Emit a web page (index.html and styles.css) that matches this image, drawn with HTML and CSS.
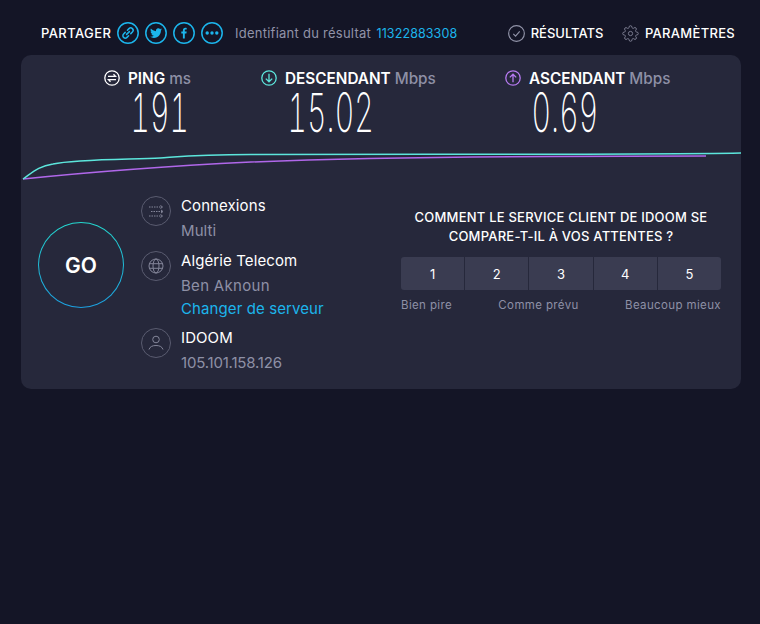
FILE: index.html
```html
<!DOCTYPE html>
<html lang="fr">
<head>
<meta charset="utf-8">
<title>Speedtest</title>
<link rel="stylesheet" href="styles.css">
</head>
<body>
<header class="topbar">
  <div class="share">
    <span class="share-label">PARTAGER</span>
    <span class="share-icon"><svg viewBox="0 0 22 22" width="22" height="22"><circle cx="11" cy="11" r="10.2" class="ic-blue"/><g class="ic-blue" stroke-width="1.5" stroke-linecap="round"><path d="M9.6 12.4l2.8-2.8"/><path d="M10.4 8.2l1.6-1.6a2.4 2.4 0 0 1 3.4 3.4l-1.6 1.6"/><path d="M11.6 13.8l-1.6 1.6a2.4 2.4 0 0 1-3.4-3.4l1.6-1.6"/></g></svg></span>
    <span class="share-icon"><svg viewBox="0 0 22 22" width="22" height="22"><circle cx="11" cy="11" r="10.2" class="ic-blue"/><path class="ic-fill" d="M17 7.3c-.4.2-.9.3-1.4.4.5-.3.9-.8 1.1-1.4-.5.3-1 .5-1.6.6a2.5 2.5 0 0 0-4.2 2.3c-2-.1-3.800-1.100-5-2.600-.7 1.100-.4 2.600.8 3.300-.4 0-.8-.1-1.100-.3 0 1.200.8 2.200 2 2.500-.4.1-.8.100-1.100 0 .3 1 1.200 1.700 2.300 1.700-1 .8-2.300 1.200-3.700 1 1.100.7 2.400 1.100 3.800 1.100 4.600 0 7.200-3.900 7-7.300.5-.4 1-.9 1.300-1.500z"/></svg></span>
    <span class="share-icon"><svg viewBox="0 0 22 22" width="22" height="22"><circle cx="11" cy="11" r="10.2" class="ic-blue"/><path class="ic-fill" d="M11.800 16.500v-5h1.600l.3-1.900h-1.900V8.500c0-.6.200-.9.900-.9h1V5.900c-.2 0-.8-.1-1.400-.1-1.500 0-2.400.9-2.400 2.500v1.300H8.300v1.900h1.600v5z"/></svg></span>
    <span class="share-icon"><svg viewBox="0 0 22 22" width="22" height="22"><circle cx="11" cy="11" r="10.2" class="ic-blue"/><circle cx="6.200" cy="11" r="1.700" class="ic-fill"/><circle cx="11" cy="11" r="1.700" class="ic-fill"/><circle cx="15.800" cy="11" r="1.700" class="ic-fill"/></svg></span>
    <span class="result-label">Identifiant du résultat</span>
    <a class="result-id">11322883308</a>
  </div>
  <nav class="nav">
    <span class="nav-item nav-results"><svg viewBox="0 0 16 16" width="17" height="17"><circle cx="8" cy="8" r="7.400" class="ic-grey"/><path class="ic-grey" d="M5 8.300l2.100 2.100 3.900-4.300"/></svg><span class="nav-r">RÉSULTATS</span></span>
    <span class="nav-item"><svg viewBox="0 0 24 24" width="17" height="17"><path class="ic-grey" stroke-width="1.300" d="M19.4 15a1.65 1.65 0 0 0 .33 1.820l.06.06a2 2 0 0 1 0 2.830 2 2 0 0 1-2.830 0l-.06-.06a1.65 1.65 0 0 0-1.820-.33 1.65 1.65 0 0 0-1 1.510V21a2 2 0 0 1-2 2 2 2 0 0 1-2-2v-.09A1.65 1.65 0 0 0 9 19.400a1.65 1.65 0 0 0-1.820.33l-.06.06a2 2 0 0 1-2.830 0 2 2 0 0 1 0-2.830l.06-.06a1.65 1.65 0 0 0 .33-1.820 1.65 1.65 0 0 0-1.510-1H3a2 2 0 0 1-2-2 2 2 0 0 1 2-2h.09A1.65 1.65 0 0 0 4.600 9a1.65 1.65 0 0 0-.33-1.820l-.06-.06a2 2 0 0 1 0-2.830 2 2 0 0 1 2.830 0l.06.06a1.65 1.65 0 0 0 1.820.33H9a1.65 1.65 0 0 0 1-1.510V3a2 2 0 0 1 2-2 2 2 0 0 1 2 2v.09a1.65 1.65 0 0 0 1 1.510 1.65 1.65 0 0 0 1.820-.33l.06-.06a2 2 0 0 1 2.830 0 2 2 0 0 1 0 2.830l-.06.06a1.65 1.65 0 0 0-.33 1.820V9a1.65 1.65 0 0 0 1.510 1H21a2 2 0 0 1 2 2 2 2 0 0 1-2 2h-.09a1.65 1.65 0 0 0-1.510 1z"/><circle cx="12" cy="12" r="3" class="ic-grey" stroke-width="1.300"/></svg><span class="nav-p">PARAMÈTRES</span></span>
  </nav>
</header>

<main class="panel">
  <section class="metrics">
    <div class="metric">
      <div class="metric-head"><svg viewBox="0 0 16 16" width="16" height="16"><circle cx="8" cy="8" r="7.200" class="ic-white"/><path class="ic-white" stroke-width="1.300" d="M4 6.300h7.500L9.500 4.200M12 9.700H4.500l2 2.100"/></svg><b>PING</b><span class="unit">ms</span></div>
      <div class="metric-value">191</div>
    </div>
    <div class="metric">
      <div class="metric-head"><svg viewBox="0 0 16 16" width="16" height="16"><circle cx="8" cy="8" r="7.200" class="ic-teal"/><path class="ic-teal" stroke-width="1.400" d="M8 3.800v8M4.800 8.600L8 11.800l3.200-3.200"/></svg><b>DESCENDANT</b><span class="unit">Mbps</span></div>
      <div class="metric-value">15.02</div>
    </div>
    <div class="metric">
      <div class="metric-head"><svg viewBox="0 0 16 16" width="16" height="16"><circle cx="8" cy="8" r="7.200" class="ic-purple"/><path class="ic-purple" stroke-width="1.400" d="M8 12.200v-8M4.800 7.400L8 4.200l3.200 3.200"/></svg><b>ASCENDANT</b><span class="unit">Mbps</span></div>
      <div class="metric-value">0.69</div>
    </div>
  </section>

  <svg class="graph" viewBox="0 0 720 36" width="720" height="36">
    <path class="line-purple" d="M2 30 C60 24 130 18 230 13 C330 9 420 8 530 7.500 L685 7"/>
    <path class="line-teal" d="M2 30 C12 23 18 17 32 15 C55 10 110 10.500 139 9 C155 8 175 5.500 230 5.500 C400 5 600 6 720 4"/>
  </svg>

  <section class="lower">
    <div class="go-wrap"><div class="go">GO</div></div>
    <div class="info">
      <div class="info-row row-conn">
        <span class="info-icon"><svg viewBox="0 0 30 30" width="30" height="30"><circle cx="15" cy="15" r="14.500" class="ic-dim"/><g class="ic-faint" stroke-dasharray="1.500 1"><path d="M8 11h12M10 15.500h11M8 20h12"/></g><path class="ic-faint" d="M19.500 9.500l2 1.500-2 1.500M20 14l2 1.500-2 1.500M19.500 18.500l2 1.500-2 1.500"/></svg></span>
        <div><div class="info-title">Connexions</div><div class="info-sub">Multi</div></div>
      </div>
      <div class="info-row row-server">
        <span class="info-icon"><svg viewBox="0 0 30 30" width="30" height="30"><circle cx="15" cy="15" r="14.500" class="ic-dim"/><circle cx="15" cy="15" r="7" class="ic-faint"/><ellipse cx="15" cy="15" rx="3" ry="7" class="ic-faint"/><path class="ic-faint" d="M8 12.700h14M8 17.300h14"/></svg></span>
        <div><div class="info-title">Algérie Telecom</div><div class="info-sub sub-wide">Ben Aknoun</div><a class="info-link">Changer de serveur</a></div>
      </div>
      <div class="info-row">
        <span class="info-icon"><svg viewBox="0 0 30 30" width="30" height="30"><circle cx="15" cy="15" r="14.500" class="ic-dim"/><circle cx="15" cy="11.500" r="3.300" class="ic-faint"/><path class="ic-faint" d="M8 21.500c1-3 3.500-4 7-4s6 1 7 4"/></svg></span>
        <div><div class="info-title">IDOOM</div><div class="info-sub sub-tight">105.101.158.126</div></div>
      </div>
    </div>
    <div class="survey">
      <h2 class="survey-title">COMMENT LE SERVICE CLIENT DE IDOOM SE<br>COMPARE-T-IL À VOS ATTENTES ?</h2>
      <div class="scale">
        <span class="scale-btn">1</span><span class="scale-btn">2</span><span class="scale-btn">3</span><span class="scale-btn">4</span><span class="scale-btn">5</span>
      </div>
      <div class="scale-labels"><span>Bien pire</span><span>Comme prévu</span><span>Beaucoup mieux</span></div>
    </div>
  </section>
</main>
</body>
</html>
```
FILE: styles.css
```css
* { box-sizing: border-box; }
html, body { margin: 0; padding: 0; }
body {
  width: 760px;
  height: 624px;
  overflow: hidden;
  background: #141526;
  color: #fff;
  font-family: Inter, "Open Sans", sans-serif;
}
svg { display: block; flex: none; fill: none; }
.ic-blue { fill: none; stroke: #1cb5ec; stroke-width: 1.500; }
.ic-fill { fill: #1cb5ec; stroke: none; }
.ic-grey { fill: none; stroke: #9193a8; stroke-width: 1.100; }
.ic-white { fill: none; stroke: #fff; stroke-width: 1.300; }
.ic-teal { fill: none; stroke: #5ce6dc; stroke-width: 1.300; }
.ic-purple { fill: none; stroke: #b67af0; stroke-width: 1.300; }
.ic-dim { fill: none; stroke: #5a5c70; stroke-width: 1; }
.ic-faint { fill: none; stroke: #84869a; stroke-width: 1; }

.topbar {
  height: 55px;
  padding: 11px 25px 0 41px;
  display: flex;
  justify-content: space-between;
  align-items: center;
  font-size: 13px;
  font-weight: 500;
}
.share { display: flex; align-items: center; }
.share-label { width: 76px; letter-spacing: .4px; }
.share-icon { margin-right: 6px; }
.result-label { margin-left: 6px; color: #9193a8; font-weight: 400; font-size: 13px; letter-spacing: .25px; width: 141.500px; white-space: nowrap; }
.result-id { color: #1cb5ec; font-weight: 400; font-size: 12.500px; letter-spacing: .1px; }
.nav { display: flex; align-items: center; }
.nav-item { display: flex; align-items: center; gap: 5.500px; }
.nav-results { margin-right: 19px; }
.nav-p { letter-spacing: .3px; }

.panel {
  width: 720px;
  height: 334px;
  margin-left: 21px;
  background: #26283b;
  border-radius: 10px;
  overflow: hidden;
}
.metrics {
  display: grid;
  grid-template-columns: 157px 244px auto;
  padding: 14px 0 0 83px;
  height: 94px;
}
.metric-head {
  display: flex;
  align-items: center;
  gap: 8px;
  height: 18px;
  font-size: 15.300px;
  white-space: nowrap;
}
.metric-head b { font-weight: 600; }
.metric-head .unit { color: #8e90a6; font-weight: 500; margin-left: -4px; }
.metric-value {
  margin-top: 2px;
  padding-left: 26.500px;
  font-weight: 200;
  font-size: 54px;
  line-height: 48px;
  font-variant-numeric: tabular-nums;
  transform: scaleX(.56);
  transform-origin: 26.500px 50%;
  white-space: nowrap;
}

.line-teal, .line-purple { fill: none; stroke-width: 1.500; }
.line-teal { stroke: #5ce6dc; }
.line-purple { stroke: #b067ea; }

.lower { display: grid; grid-template-columns: 120px 260px 320px; }
.go-wrap { padding: 37px 0 0 17px; }
.go {
  width: 86px;
  height: 86px;
  border-radius: 50%;
  border: 1px solid transparent;
  background: linear-gradient(#26283b, #26283b) padding-box, linear-gradient(#24d8cf, #1c9fe0) border-box;
  display: flex;
  align-items: center;
  justify-content: center;
  font-size: 21px;
  font-weight: 600;
}
.info { padding-top: 11px; }
.info-row { display: flex; gap: 10px; }
.row-conn { height: 55px; }
.row-server { height: 77px; }
.info-title { font-size: 15px; line-height: 20px; color: #fff; letter-spacing: .1px; }
.info-sub { font-size: 15px; line-height: 20px; margin-top: 5px; color: #8e90a6; letter-spacing: .1px; }
.sub-wide { letter-spacing: .3px; }
.sub-tight { letter-spacing: -.2px; }
.info-link { display: block; font-size: 15px; line-height: 20px; margin-top: 3px; color: #1cb5ec; letter-spacing: .1px; }

.survey { padding: 23px 0 0 0; }
.survey-title {
  margin: 0;
  width: 320px;
  text-align: center;
  font-size: 13px;
  font-weight: 500;
  letter-spacing: .22px;
  line-height: 19px;
  white-space: nowrap;
}
.scale { display: flex; gap: 1px; margin-top: 11px; width: 320px; }
.scale-btn {
  flex: 1;
  height: 33px;
  background: #3a3c51;
  display: flex;
  align-items: center;
  justify-content: center;
  font-size: 13px;
}
.scale-btn:first-child { border-radius: 3px 0 0 3px; }
.scale-btn:last-child { border-radius: 0 3px 3px 0; }
.scale-labels {
  display: flex;
  justify-content: space-between;
  width: 320px;
  margin-top: 8px;
  font-size: 11.500px;
  letter-spacing: .37px;
  line-height: 14px;
  color: #8e90a6;
}
```
